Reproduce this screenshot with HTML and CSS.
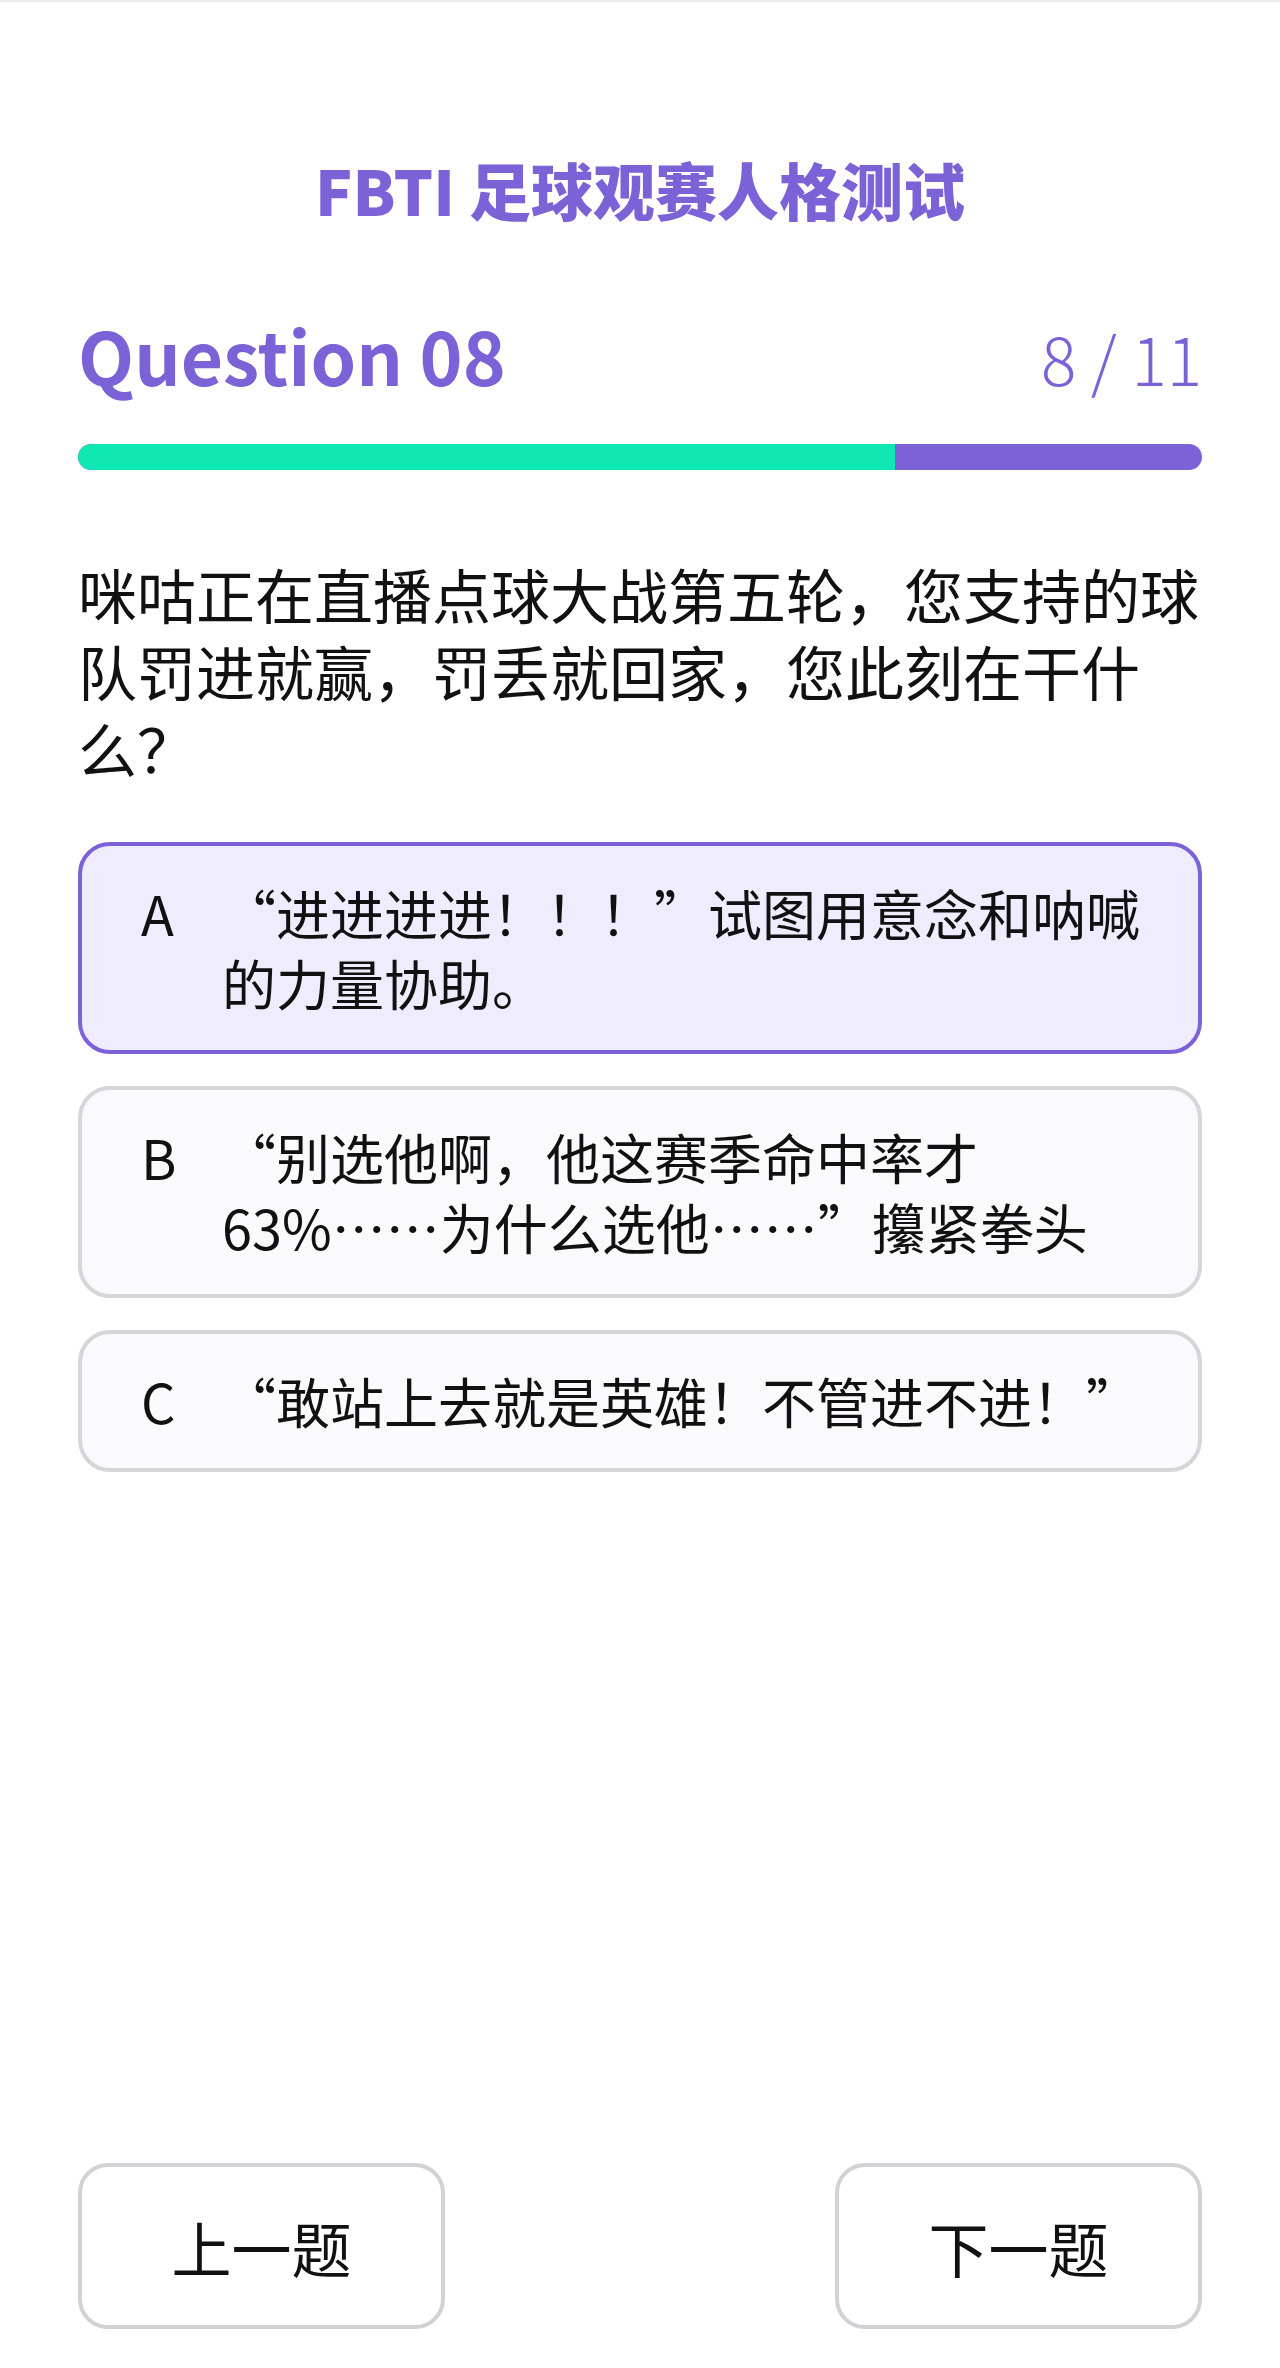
FILE: index.html
```html
<!DOCTYPE html>
<html lang="zh-CN">
<head>
    <meta charset="UTF-8">
    <meta name="viewport" content="width=device-width, initial-scale=1.0">
    <title>FBTI 足球观赛人格测试</title>
    <link rel="stylesheet" href="styles.css">
</head>
<body>
    <div class="page">
        <h1 class="title">FBTI 足球观赛人格测试</h1>

        <div class="quiz-head">
            <h2 class="q-num">Question 08</h2>
            <span class="q-count">8 / 11</span>
        </div>

        <div class="progress">
            <div class="progress-fill" style="width: 72.7%"></div>
        </div>

        <p class="question">咪咕正在直播点球大战第五轮，您支持的球队罚进就赢，罚丢就回家，您此刻在干什么？</p>

        <div class="options">
            <div class="option active">
                <span class="option-key">A</span>
                <span class="option-text">“进进进进！！！”试图用意念和呐喊的力量协助。</span>
            </div>
            <div class="option">
                <span class="option-key">B</span>
                <span class="option-text">“别选他啊，他这赛季命中率才63%……为什么选他……”攥紧拳头</span>
            </div>
            <div class="option">
                <span class="option-key">C</span>
                <span class="option-text">“敢站上去就是英雄！不管进不进！”</span>
            </div>
        </div>

        <div class="nav">
            <button class="nav-btn">上一题</button>
            <button class="nav-btn">下一题</button>
        </div>
    </div>
</body>
</html>
```

FILE: styles.css
```css
* {
    margin: 0;
    padding: 0;
    box-sizing: border-box;
    font-family: "Noto Sans CJK SC", "Noto Sans", sans-serif;
}

body {
    background: #ffffff;
    color: #111111;
    border-top: 2px solid #ececee;
}

.page {
    min-height: 2366px;
    padding: 144px 78px 39px;
    display: flex;
    flex-direction: column;
}

.title {
    text-align: center;
    font-size: 62px;
    line-height: 86px;
    font-weight: 900;
    color: #7b62d6;
}

.quiz-head {
    display: flex;
    justify-content: space-between;
    align-items: baseline;
    margin-top: 74px;
    color: #7b62d6;
}

.q-num {
    font-size: 73px;
    line-height: 96px;
    font-weight: 700;
}

.q-count {
    font-size: 66px;
    line-height: 96px;
    font-weight: 300;
}

.progress {
    margin-top: 39px;
    height: 26px;
    border-radius: 13px;
    background: #7b62d6;
    overflow: hidden;
}

.progress-fill {
    height: 100%;
    background: #10e8b3;
    border-radius: 13px 0 0 13px;
}

.question {
    margin-top: 85px;
    font-size: 59px;
    line-height: 77px;
}

.options {
    margin-top: 56px;
    display: flex;
    flex-direction: column;
    gap: 32px;
}

.option {
    display: flex;
    padding: 32px 40px 32px 59px;
    border: 4px solid #d6d6da;
    border-radius: 32px;
    background: #fafafc;
    font-size: 54px;
    line-height: 70px;
}

.option.active {
    border-color: #7b62d6;
    background: #efedfd;
}

.option-key {
    flex: 0 0 81px;
}

.option-text {
    flex: 1;
}

.nav {
    margin-top: auto;
    display: flex;
    justify-content: space-between;
}

.nav-btn {
    width: 367px;
    height: 166px;
    border: 4px solid #d2d2d6;
    border-radius: 30px;
    background: #ffffff;
    font-size: 60px;
    color: #111111;
}
```
